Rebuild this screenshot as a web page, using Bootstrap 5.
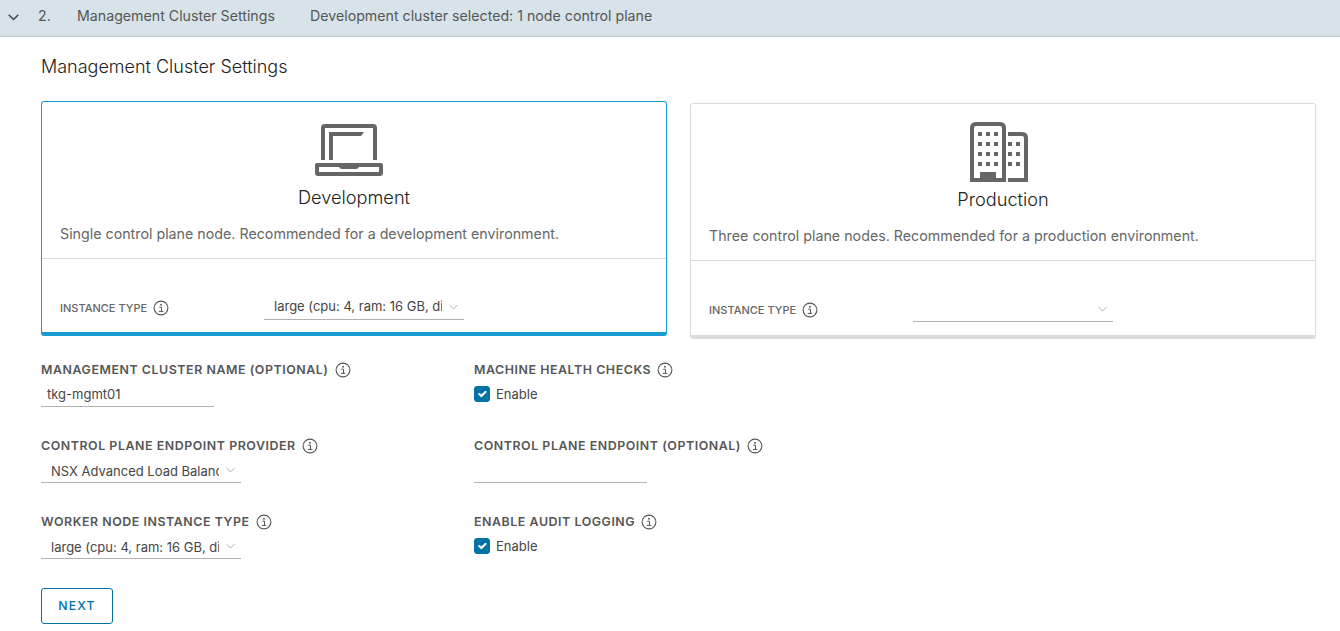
<!DOCTYPE html>
<html lang="en">
<head>
  <meta charset="UTF-8">
  <meta name="viewport" content="width=device-width, initial-scale=1.0">
  <title>Management Cluster Settings</title>
  <link href="https://cdn.jsdelivr.net/npm/bootstrap@5.3.3/dist/css/bootstrap.min.css" rel="stylesheet">
  <style>
    body { font-family: Inter, "Liberation Sans", sans-serif; color: #454545; background: #fff; overflow: hidden; }
    .step-bar { height: 37px; background: #d8e3e9; border-bottom: 1px solid #c4c9cc; font-size: 14.2px; color: #565656; padding-bottom: 5px; }
    .step-chevron { width: 11px; height: 7px; margin-left: 8px; margin-top: 4px; }
    .step-num { margin-left: 19px; width: 39px; }
    .step-name { width: 233px; }
    .page-body { padding: 0 24px 0 41px; }
    .page-title { font-size: 18px; font-weight: 300; color: #222; margin: 19px 0 0; line-height: 22px; }
    .plan-row { margin-top: 23px; gap: 23px; }
    .plan-card { width: 626px; height: 235px; border: 1px solid #dcdcdc; border-bottom: 4px solid #dcdcdc; border-radius: 3px; }
    .plan-alt { margin-top: 2px; height: 236px; }
    .plan-on { border-color: #179bd3; }
    .plan-top { height: 157px; border-bottom: 1px solid #dcdcdc; padding: 22px 18px 0; text-align: center; }
    .plan-icon { display: block; height: 52px; margin-left: calc(50% - 39px); }
    .plan-alt .plan-icon { height: 60px; margin-top: -4px; margin-left: calc(50% - 33px); }
    .plan-name { font-size: 18.2px; font-weight: 300; color: #222; line-height: 22px; margin: 10px 0 0; }
    .plan-alt .plan-name { margin-top: 6px; }
    .plan-desc { font-size: 14.25px; color: #666; text-align: left; margin: 16px 0 0; line-height: 20px; }
    .plan-foot { padding: 37px 18px 0; }
    .mini-label { width: 204px; font-size: 11px; font-weight: 500; color: #666; }
    .field-label { font-size: 12.4px; font-weight: 600; letter-spacing: .55px; color: #565656; line-height: 16px; white-space: nowrap; }
    .info-mark { width: 16px; height: 16px; margin-left: 6px; vertical-align: -4px; }
    .form-select.line-select { width: 200px; height: 24px; padding: 0 22px 2px 10px; font-size: 13px; color: #454545; border: 0; border-bottom: 1px solid #b3b3b3; border-radius: 0; box-shadow: none; background-position: right 6px top 8px; background-size: 9px 6px; background-image: url("data:image/svg+xml,%3csvg xmlns='http://www.w3.org/2000/svg' viewBox='0 0 11 7'%3e%3cpath fill='none' stroke='%23a0a0a0' d='M.5 1l5 5 5-5'/%3e%3c/svg%3e"); }
    .form-grid .form-select.line-select { padding-top: 2px; padding-bottom: 0; }
    .form-control.line-input { height: 24px; padding: 0 6px 2px; font-size: 13px; color: #454545; border: 0; border-bottom: 1px solid #b3b3b3; border-radius: 0; box-shadow: none; width: 173px; }
    .form-grid { display: grid; grid-template-columns: 433px 1fr; grid-template-rows: 76px 76px 74px; margin-top: 23px; }
    .field-stack { display: flex; flex-direction: column; gap: 5px; }
    .form-check.tick-row { margin: 3px 0 0; padding: 0 0 0 22px; min-height: 16px; font-size: 13px; line-height: 16px; color: #454545; }
    .tick-row .form-check-input { width: 16px; height: 16px; margin: 0 0 0 -22px; border-radius: 3px; background-color: #0072a3; border-color: #0072a3; }
    .btn.next-btn { width: 72px; height: 36px; padding: 1px 0 0; font-size: 12.3px; font-weight: 500; letter-spacing: 1.2px; color: #0072a3; background: #fff; border: 1px solid #0072a3; border-radius: 3px; }
  </style>
</head>
<body>
  <svg width="0" height="0" class="position-absolute">
    <symbol id="info" viewBox="0 0 16 16">
      <circle cx="8" cy="8" r="6.9" fill="none" stroke="#565656" stroke-width="1.1"/>
      <circle cx="8" cy="4.8" r=".95" fill="#565656"/>
      <path d="M6.3 7.2H8.5V11.4M5.9 11.4H10.3" fill="none" stroke="#565656" stroke-width="1"/>
    </symbol>
  </svg>

  <div class="step-bar d-flex align-items-center">
    <svg class="step-chevron" viewBox="0 0 11 7"><path d="M.7 .7l4.8 4.8 4.8-4.8" fill="none" stroke="#454545" stroke-width="1.5"/></svg>
    <span class="step-num">2.</span>
    <span class="step-name">Management Cluster Settings</span>
    <span>Development cluster selected: 1 node control plane</span>
  </div>

  <div class="page-body">
    <h1 class="page-title">Management Cluster Settings</h1>

    <div class="plan-row d-flex align-items-start">
      <div class="card plan-card plan-on">
        <div class="plan-top">
          <svg class="plan-icon" viewBox="0 0 68 52" width="68" height="52">
            <path d="M8 36V4Q8 2 10 2H58Q60 2 60 4V36" fill="none" stroke="#666" stroke-width="4"/>
            <path d="M14 36V8H49L46 12H18V36Z" fill="#666"/>
            <path fill-rule="evenodd" fill="#666" d="M2 39H66Q68 39 68 41V49Q68 52 65 52H3Q0 52 0 49V41Q0 39 2 39ZM4 43V48H64V43H44Q43 45 41 45H27Q25 45 24 43Z"/>
          </svg>
          <h2 class="plan-name">Development</h2>
          <p class="plan-desc">Single control plane node. Recommended for a development environment.</p>
        </div>
        <div class="plan-foot d-flex align-items-center">
          <span class="mini-label">INSTANCE TYPE<svg class="info-mark"><use href="#info"/></svg></span>
          <select class="form-select line-select"><option>large (cpu: 4, ram: 16 GB, disk: 40 GB)</option></select>
        </div>
      </div>

      <div class="card plan-card plan-alt">
        <div class="plan-top">
          <svg class="plan-icon" viewBox="0 0 58 60" width="58" height="60">
            <path d="M2 60V6Q2 2 6 2H30Q34 2 34 6V60" fill="none" stroke="#666" stroke-width="4"/>
            <path d="M0 56H36V60H0Z" fill="#666"/>
            <path d="M10 50H26V60H10Z" fill="#666"/>
            <path fill="#666" d="M8 10h4v4H8zM16 10h4v4h-4zM24 10h4v4h-4zM8 20h4v4H8zM16 20h4v4h-4zM24 20h4v4h-4zM8 30h4v4H8zM16 30h4v4h-4zM24 30h4v4h-4zM8 40h4v4H8zM16 40h4v4h-4zM24 40h4v4h-4z"/>
            <path d="M38 12H52Q56 12 56 16V58H38" fill="none" stroke="#666" stroke-width="4"/>
            <path fill="#666" d="M38 20h4v4h-4zM46 20h4v4h-4zM38 30h4v4h-4zM46 30h4v4h-4zM38 40h4v4h-4zM46 40h4v4h-4z"/>
          </svg>
          <h2 class="plan-name">Production</h2>
          <p class="plan-desc">Three control plane nodes. Recommended for a production environment.</p>
        </div>
        <div class="plan-foot d-flex align-items-center">
          <span class="mini-label">INSTANCE TYPE<svg class="info-mark"><use href="#info"/></svg></span>
          <select class="form-select line-select"><option></option></select>
        </div>
      </div>
    </div>

    <div class="form-grid">
      <div class="field-stack">
        <label class="field-label">MANAGEMENT CLUSTER NAME (OPTIONAL)<svg class="info-mark"><use href="#info"/></svg></label>
        <input type="text" class="form-control line-input" value="tkg-mgmt01">
      </div>
      <div class="field-stack">
        <label class="field-label">MACHINE HEALTH CHECKS<svg class="info-mark"><use href="#info"/></svg></label>
        <div class="form-check tick-row">
          <input class="form-check-input" type="checkbox" id="mhc" checked>
          <label class="form-check-label" for="mhc">Enable</label>
        </div>
      </div>
      <div class="field-stack">
        <label class="field-label">CONTROL PLANE ENDPOINT PROVIDER<svg class="info-mark"><use href="#info"/></svg></label>
        <select class="form-select line-select"><option>NSX Advanced Load Balancer</option></select>
      </div>
      <div class="field-stack">
        <label class="field-label">CONTROL PLANE ENDPOINT (OPTIONAL)<svg class="info-mark"><use href="#info"/></svg></label>
        <input type="text" class="form-control line-input">
      </div>
      <div class="field-stack">
        <label class="field-label">WORKER NODE INSTANCE TYPE<svg class="info-mark"><use href="#info"/></svg></label>
        <select class="form-select line-select"><option>large (cpu: 4, ram: 16 GB, disk: 40 GB)</option></select>
      </div>
      <div class="field-stack">
        <label class="field-label">ENABLE AUDIT LOGGING<svg class="info-mark"><use href="#info"/></svg></label>
        <div class="form-check tick-row">
          <input class="form-check-input" type="checkbox" id="audit" checked>
          <label class="form-check-label" for="audit">Enable</label>
        </div>
      </div>
    </div>

    <button type="button" class="btn next-btn">NEXT</button>
  </div>
  <script src="https://cdn.jsdelivr.net/npm/bootstrap@5.3.3/dist/js/bootstrap.bundle.min.js"></script>
</body>
</html>
